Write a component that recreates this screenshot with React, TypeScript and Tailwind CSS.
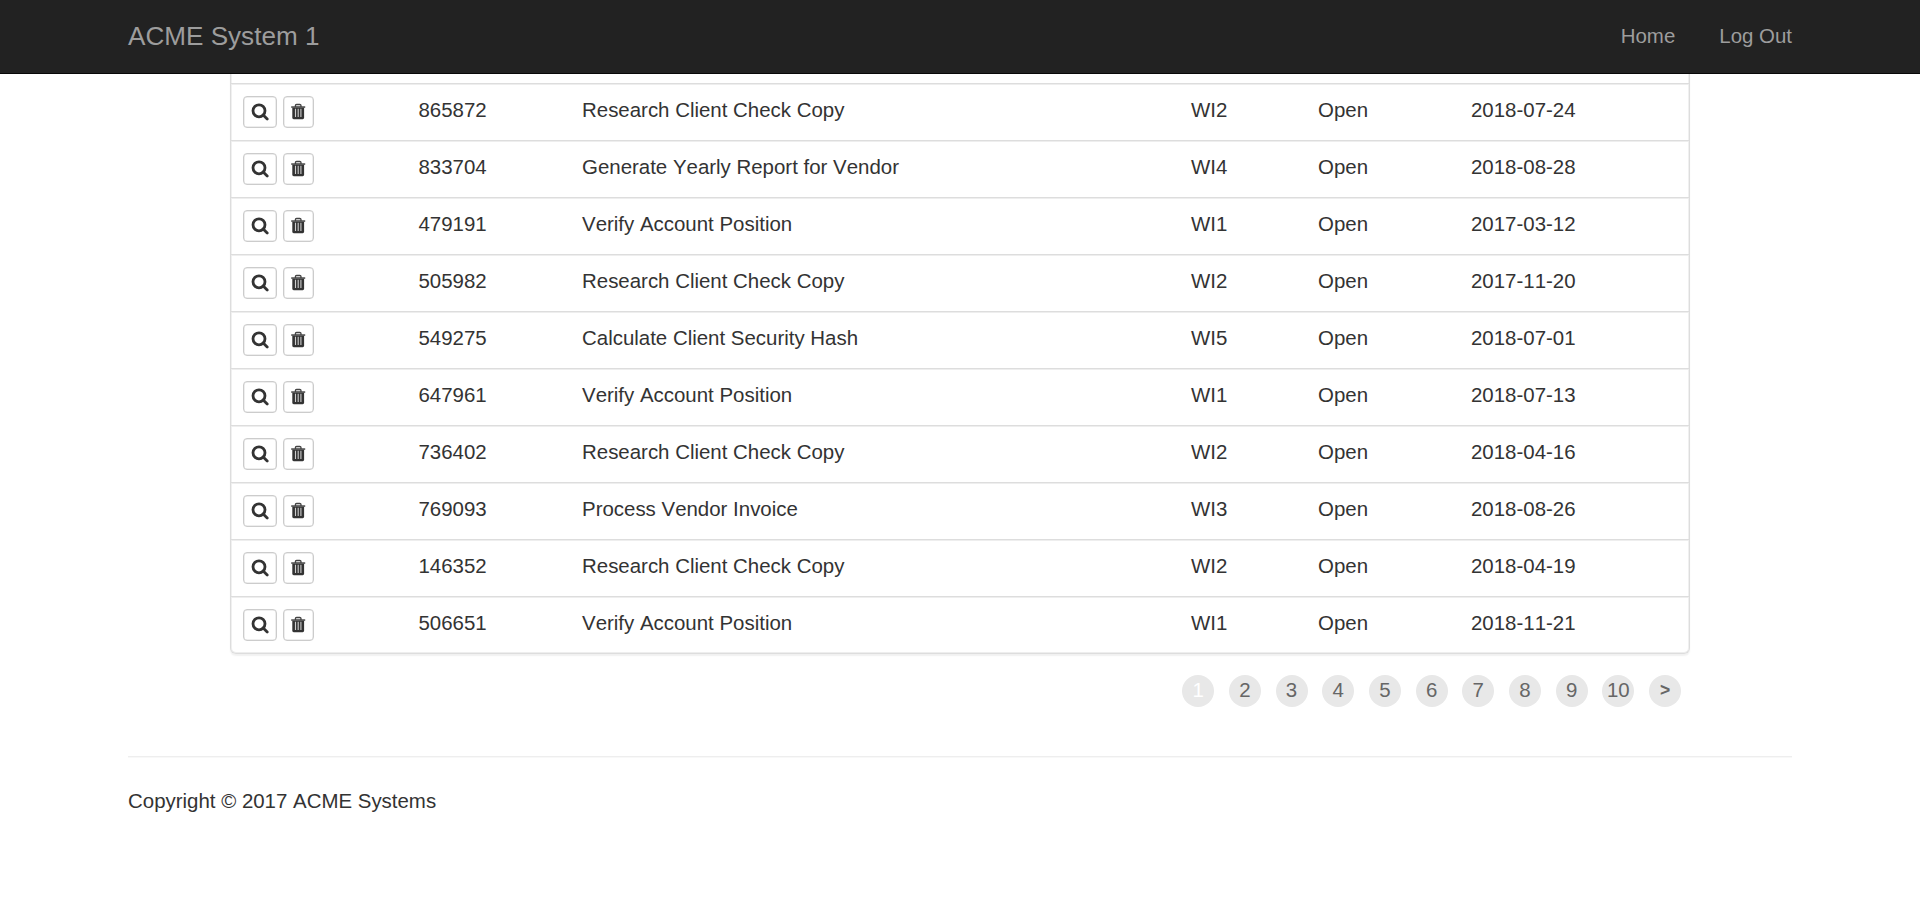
const rows = [
  ['865872', 'Research Client Check Copy', 'WI2', 'Open', '2018-07-24'],
  ['833704', 'Generate Yearly Report for Vendor', 'WI4', 'Open', '2018-08-28'],
  ['479191', 'Verify Account Position', 'WI1', 'Open', '2017-03-12'],
  ['505982', 'Research Client Check Copy', 'WI2', 'Open', '2017-11-20'],
  ['549275', 'Calculate Client Security Hash', 'WI5', 'Open', '2018-07-01'],
  ['647961', 'Verify Account Position', 'WI1', 'Open', '2018-07-13'],
  ['736402', 'Research Client Check Copy', 'WI2', 'Open', '2018-04-16'],
  ['769093', 'Process Vendor Invoice', 'WI3', 'Open', '2018-08-26'],
  ['146352', 'Research Client Check Copy', 'WI2', 'Open', '2018-04-19'],
  ['506651', 'Verify Account Position', 'WI1', 'Open', '2018-11-21'],
];

const pages = ['1', '2', '3', '4', '5', '6', '7', '8', '9', '10', '>'];

function SearchIcon() {
  return (
    <svg width="18" height="18" viewBox="0 0 18 18" fill="none" stroke="#333">
      <circle cx="8" cy="7.8" r="6" strokeWidth="2.8" />
      <path d="M12.2 12 L16.2 16" strokeWidth="2.8" strokeLinecap="round" />
    </svg>
  );
}

function TrashIcon() {
  return (
    <svg width="15" height="18" viewBox="0 0 15 18">
      <path d="M4.4 4 V2.6 Q4.4 1.4 5.6 1.4 H8.8 Q10 1.4 10 2.6 V4" fill="#ccc" stroke="#444" strokeWidth="1.3" />
      <path d="M0.2 3.3 H14.2 V4.8 H0.2 Z" fill="#444" />
      <path d="M1.3 4.8 H13.1 V14.8 Q13.1 16.2 11.7 16.2 H2.7 Q1.3 16.2 1.3 14.8 Z" fill="#333" />
      <path d="M4.5 5.8 V14 M7.2 5.8 V14 M9.9 5.8 V14" stroke="#ccc" strokeWidth="1.1" />
    </svg>
  );
}

export default function App() {
  return (
    <div className="flex h-[904px] w-[1920px] flex-col overflow-hidden bg-white font-['Liberation_Sans',Arial,sans-serif] text-[20.45px] leading-[29px] text-[#333] [font-kerning:none]">
      <nav className="flex h-[74px] shrink-0 items-center justify-between border-b border-[#080808] bg-[#222] px-32 text-[#9d9d9d]">
        <a className="text-[26.1px]">ACME System 1</a>
        <div className="flex gap-11 pb-0.5">
          <a>Home</a>
          <a>Log Out</a>
        </div>
      </nav>

      <main className="ml-[230px] flex w-[1460px] flex-col">
        <div className="rounded-b-[6px] border-x border-b border-[#ddd] pt-[9px] shadow-[0_1.5px_1.5px_rgba(0,0,0,0.06),inset_0_-1px_0_#eee,inset_1px_0_0_#f0f0f0,inset_-1px_0_0_#f0f0f0]">
          {rows.map(([id, description, type, status, date]) => (
            <div
              key={id}
              className="grid h-[57px] grid-cols-[175.5px_163.5px_609px_127px_153px_1fr] border-t border-[#ddd] pl-3 shadow-[inset_0_1px_0_#eee]"
            >
              <div className="flex items-start gap-1.5 pt-3">
                <button className="flex h-8 w-[34px] items-center justify-center rounded-[4px] border border-[#ccc] bg-white shadow-[inset_0_0_0_0.5px_#ddd]">
                  <SearchIcon />
                </button>
                <button className="flex h-8 w-[31px] items-center justify-center rounded-[4px] border border-[#ccc] bg-white shadow-[inset_0_0_0_0.5px_#ddd]">
                  <TrashIcon />
                </button>
              </div>
              <span className="pt-[11px]">{id}</span>
              <span className="pt-[11px]">{description}</span>
              <span className="pt-[11px]">{type}</span>
              <span className="pt-[11px]">{status}</span>
              <span className="pt-[11px]">{date}</span>
            </div>
          ))}
        </div>
        <div className="mt-[21px] flex justify-end gap-[14.7px] pr-[9px]">
          {pages.map((p) => (
            <a
              key={p}
              className={`flex h-8 w-8 items-center justify-center rounded-full bg-[#e8e8e8] ${
                p === '1'
                  ? 'pb-1 text-white'
                  : p === '>'
                    ? 'pb-[2px] text-[17.5px] font-bold text-[#666]'
                    : 'pb-1 text-[#666]'
              }`}
            >
              {p}
            </a>
          ))}
        </div>
      </main>

      <footer className="mx-32 mt-[49px] border-t border-[#eee] pt-[29px] shadow-[inset_0_1px_0_#f8f8f8]">
        Copyright © 2017 ACME Systems
      </footer>
    </div>
  );
}
